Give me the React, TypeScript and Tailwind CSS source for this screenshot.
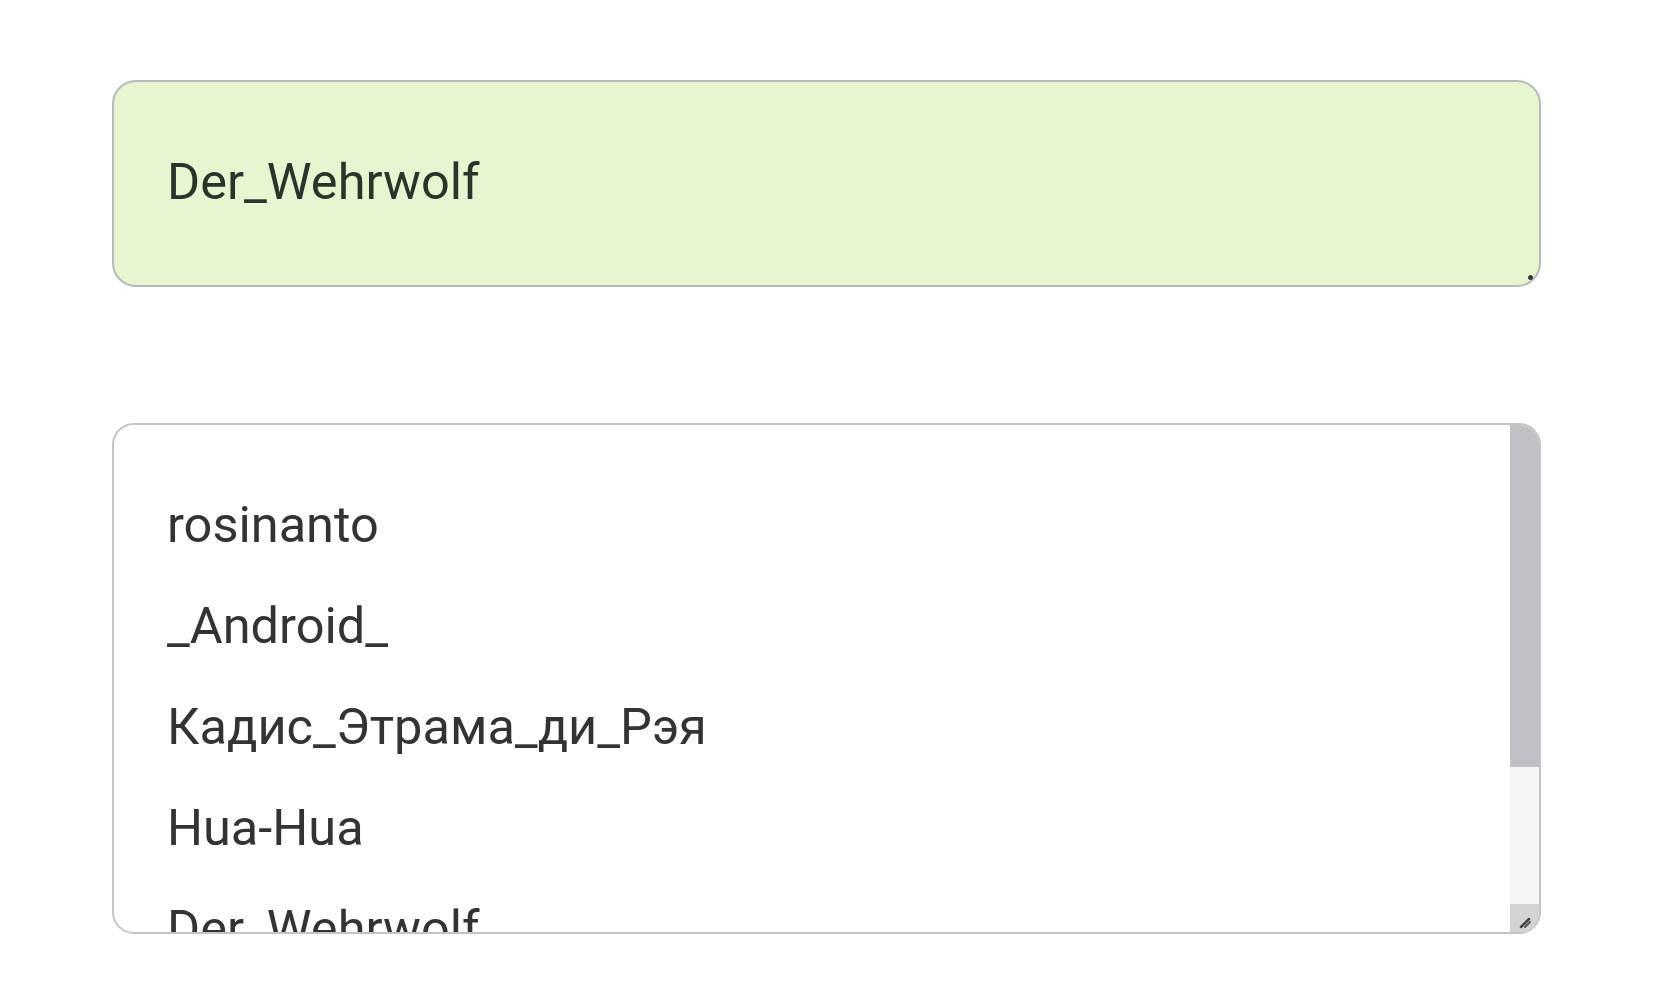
import React from "react";

const items = ["rosinanto", "_Android_", "Кадис_Этрама_ди_Рэя", "Hua-Hua", "Der_Wehrwolf"];

export default function App() {
  return (
    <div
      className="min-h-screen bg-white pt-[80px] px-[112px] flex flex-col gap-[136px]"
      style={{ fontFamily: "Roboto, 'Noto Sans', sans-serif" }}
    >
      <div className="relative h-[207px] w-[1429px] rounded-[24px] border-2 border-[#b9bab7] bg-[#e7f5d1] flex items-center pl-[53px]">
        <span className="text-[50.5px] leading-none text-[#2c342a] -mt-[3px]">Der_Wehrwolf</span>
        <div className="absolute right-[6px] bottom-[5px] w-[5px] h-[5px] rounded-full bg-[#3a3a3a]" />
      </div>

      <div className="relative h-[511px] w-[1429px] rounded-[22px] border-2 border-[#c4c4c4] bg-white overflow-hidden flex">
        <div className="flex-1 flex flex-col pl-[53px] pt-[49px]">
          {items.map((t) => (
            <div key={t} className="h-[101px] shrink-0 text-[50.5px] leading-[101px] text-[#333333]">
              {t}
            </div>
          ))}
        </div>
        <div className="w-[29px] shrink-0 flex flex-col -mt-[2px] -mb-[2px]">
          <div className="h-[344px] bg-[#c1c1c5]" />
          <div className="flex-1 bg-[#f6f6f6]" />
          <div className="h-[30px] bg-[#d3d3d6] relative">
            <svg className="absolute left-[9px] top-[11px]" width="14" height="14" viewBox="0 0 14 14">
              <path d="M2 12 L10 4" stroke="#444" strokeWidth="2.5" strokeLinecap="round" />
              <path d="M6 12 L11 7" stroke="#555" strokeWidth="2" strokeLinecap="round" />
            </svg>
          </div>
        </div>
      </div>
    </div>
  );
}
